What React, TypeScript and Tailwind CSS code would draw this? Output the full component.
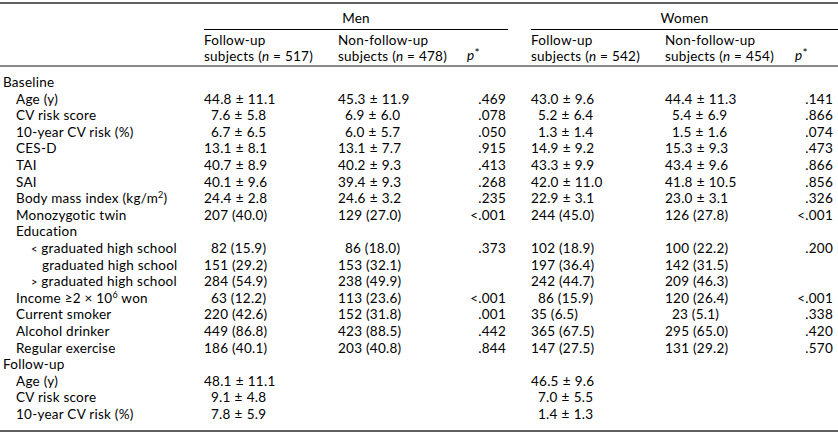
import React from "react";

type Cell = string;
type Row = {
  label: React.ReactNode;
  lvl: 0 | 1 | 2 | 3;
  v?: [Cell, Cell, Cell, Cell, Cell, Cell];
};

const rows: Row[] = [
  { label: "Baseline", lvl: 0 },
  { label: "Age (y)", lvl: 1, v: ["44.8 ± 11.1", "45.3 ± 11.9", ".469", "43.0 ± 9.6", "44.4 ± 11.3", ".141"] },
  { label: "CV risk score", lvl: 1, v: ["~7.6 ± 5.8", "~6.9 ± 6.0", ".078", "~5.2 ± 6.4", "~5.4 ± 6.9", ".866"] },
  { label: "10-year CV risk (%)", lvl: 1, v: ["~6.7 ± 6.5", "~6.0 ± 5.7", ".050", "~1.3 ± 1.4", "~1.5 ± 1.6", ".074"] },
  { label: "CES-D", lvl: 1, v: ["13.1 ± 8.1", "13.1 ± 7.7", ".915", "14.9 ± 9.2", "15.3 ± 9.3", ".473"] },
  { label: "TAI", lvl: 1, v: ["40.7 ± 8.9", "40.2 ± 9.3", ".413", "43.3 ± 9.9", "43.4 ± 9.6", ".866"] },
  { label: "SAI", lvl: 1, v: ["40.1 ± 9.6", "39.4 ± 9.3", ".268", "42.0 ± 11.0", "41.8 ± 10.5", ".856"] },
  {
    label: (
      <>
        Body mass index (kg/m<sup className="text-[9px] relative top-[-5px]">2</sup>)
      </>
    ),
    lvl: 1,
    v: ["24.4 ± 2.8", "24.6 ± 3.2", ".235", "22.9 ± 3.1", "23.0 ± 3.1", ".326"],
  },
  { label: "Monozygotic twin", lvl: 1, v: ["207 (40.0)", "129 (27.0)", "<.001", "244 (45.0)", "126 (27.8)", "<.001"] },
  { label: "Education", lvl: 1 },
  {
    label: (
      <>
        <span className="text-[11px]">&lt;</span> graduated high school
      </>
    ),
    lvl: 2,
    v: ["~82 (15.9)", "~86 (18.0)", ".373", "102 (18.9)", "100 (22.2)", ".200"],
  },
  { label: "graduated high school", lvl: 3, v: ["151 (29.2)", "153 (32.1)", "", "197 (36.4)", "142 (31.5)", ""] },
  {
    label: (
      <>
        <span className="text-[11px]">&gt;</span> graduated high school
      </>
    ),
    lvl: 2,
    v: ["284 (54.9)", "238 (49.9)", "", "242 (44.7)", "209 (46.3)", ""],
  },
  {
    label: (
      <>
        Income ≥2 × 10<sup className="text-[9px] relative top-[-5px]">6</sup> won
      </>
    ),
    lvl: 1,
    v: ["~63 (12.2)", "113 (23.6)", "<.001", "~86 (15.9)", "120 (26.4)", "<.001"],
  },
  { label: "Current smoker", lvl: 1, v: ["220 (42.6)", "152 (31.8)", ".001", "35 (6.5)", "~23 (5.1)", ".338"] },
  { label: "Alcohol drinker", lvl: 1, v: ["449 (86.8)", "423 (88.5)", ".442", "365 (67.5)", "295 (65.0)", ".420"] },
  { label: "Regular exercise", lvl: 1, v: ["186 (40.1)", "203 (40.8)", ".844", "147 (27.5)", "131 (29.2)", ".570"] },
  { label: "Follow-up", lvl: 0 },
  { label: "Age (y)", lvl: 1, v: ["48.1 ± 11.1", "", "", "46.5 ± 9.6", "", ""] },
  { label: "CV risk score", lvl: 1, v: ["~9.1 ± 4.8", "", "", "~7.0 ± 5.5", "", ""] },
  { label: "10-year CV risk (%)", lvl: 1, v: ["~7.8 ± 5.9", "", "", "~1.4 ± 1.3", "", ""] },
];

const grid =
  "grid grid-cols-[204px_134px_120px_50px_23px_134px_120px_53px]";

function Val({ s }: { s: string }) {
  if (!s) return <div />;
  const indent = s.startsWith("~");
  const t = indent ? s.slice(1) : s;
  return (
    <div className={indent ? "pl-[7px] whitespace-nowrap" : "whitespace-nowrap"}>
      {t.split(" ± ").map((part, i, arr) => (
        <React.Fragment key={i}>
          {part}
          {i < arr.length - 1 && <span className="px-[4px]">±</span>}
        </React.Fragment>
      ))}
    </div>
  );
}

function P({ s, right }: { s: string; right: string }) {
  return <div className={right + " text-right whitespace-nowrap"}>{s}</div>;
}

const lvlClass: Record<number, string> = {
  0: "pl-[3px]",
  1: "pl-[16px]",
  2: "pl-[31px]",
  3: "pl-[42px]",
};

export default function App() {
  return (
    <div className="w-[838px] h-[432px] bg-white text-black text-[13.5px] tracking-[0.25px] font-['Lato','Open_Sans',sans-serif] pt-[2px]">
      <div className="border-t-2 border-[#606060]">
        {/* header row 1 */}
        <div className={grid + " leading-[16px]"}>
          <div />
          <div className="col-span-3 border-b border-black pt-[6px] pb-[3px] text-center">Men</div>
          <div />
          <div className="col-span-3 border-b border-black pt-[6px] pb-[3px] text-center">Women</div>
        </div>
        {/* header row 2 */}
        <div className={grid + " leading-[16px] pt-[2px] pb-[1px] border-b-2 border-[#8a8a8a]"}>
          <div />
          <div className="whitespace-nowrap">
            Follow-up
            <br />
            subjects (<i>n</i> = 517)
          </div>
          <div className="whitespace-nowrap">
            Non-follow-up
            <br />
            subjects (<i>n</i> = 478)
          </div>
          <div className="flex items-end pl-[9px]">
            <span>
              <i>p</i>
              <span className="relative top-[-3px] text-[12px]">*</span>
            </span>
          </div>
          <div />
          <div className="whitespace-nowrap">
            Follow-up
            <br />
            subjects (<i>n</i> = 542)
          </div>
          <div className="whitespace-nowrap">
            Non-follow-up
            <br />
            subjects (<i>n</i> = 454)
          </div>
          <div className="flex items-end pl-[10px]">
            <span>
              <i>p</i>
              <span className="relative top-[-3px] text-[12px]">*</span>
            </span>
          </div>
        </div>
        {/* body */}
        <div className="pt-[7px] pb-[8px] border-b-2 border-[#606060]">
          {rows.map((r, i) => (
            <div key={i} className={grid + " h-[16.6px] leading-[16.6px]"}>
              <div className={lvlClass[r.lvl] + " whitespace-nowrap"}>{r.label}</div>
              {r.v ? (
                <>
                  <Val s={r.v[0]} />
                  <Val s={r.v[1]} />
                  <P s={r.v[2]} right="pr-[2px]" />
                  <div />
                  <Val s={r.v[3]} />
                  <Val s={r.v[4]} />
                  <P s={r.v[5]} right="pr-[5px]" />
                </>
              ) : null}
            </div>
          ))}
        </div>
      </div>
    </div>
  );
}
